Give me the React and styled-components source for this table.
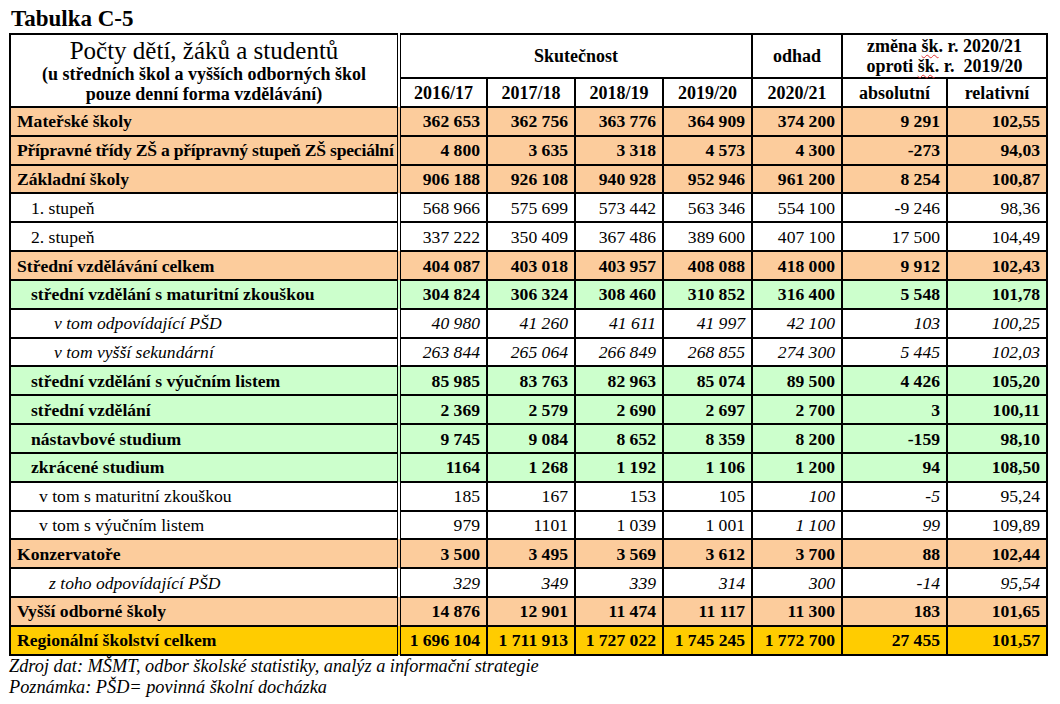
import React from "react";
import styled, { createGlobalStyle, css } from "styled-components";

const SERIF = `"Liberation Serif", "Times New Roman", serif`;

const GlobalStyle = createGlobalStyle`
  html, body { margin: 0; padding: 0; background: #fff; }
  body { font-family: ${SERIF}; color: #000; }
`;

const Page = styled.div`
  font-family: ${SERIF};
  color: #000;
  padding: 6px 9px 0 9px;
  width: 1042px;
`;

const Title = styled.h1`
  margin: 0 0 2px 2px;
  font-size: 23px;
  line-height: 25px;
  font-weight: bold;
`;

const Table = styled.table`
  border-collapse: collapse;
  table-layout: fixed;
  width: 1039px;
  border: 2px solid #000;
`;

const bg = {
  orange: "#FCCC9C",
  green: "#CCFFCC",
  white: "#FFFFFF",
  yellow: "#FFCC00",
};

const HeadCell = styled.th`
  border: 2px solid #000;
  padding: 0 2px;
  font-weight: bold;
  font-size: 18px;
  line-height: 20px;
  text-align: center;
  vertical-align: middle;
  background: #fff;
  ${(p) => p.$double && css`border-right: 4px double #000;`}
`;

const MainHead = styled.div`
  font-size: 25px;
  line-height: 26px;
  font-weight: normal;
`;

const SubHead = styled.div`
  font-size: 18px;
  line-height: 20px;
  font-weight: bold;
`;

const Spell = styled.span`
  text-decoration: underline wavy #e03030;
  text-decoration-thickness: 1px;
  text-underline-offset: 2px;
`;

const HeadRow1 = styled.tr`
  height: 44px;
`;
const HeadRow2 = styled.tr`
  height: 29px;
`;

const Row = styled.tr`
  height: 28.84px;
  background: ${(p) => bg[p.$kind]};
`;

const LabelCell = styled.td`
  border: 2px solid #000;
  border-right: 4px double #000;
  padding: 0 0 0 ${(p) => 6 + (p.$indent || 0)}px;
  font-size: 17.6px;
  line-height: 20px;
  letter-spacing: ${(p) => (p.$tight ? "-0.22px" : "normal")};
  font-weight: ${(p) => (p.$bold ? "bold" : "normal")};
  font-style: ${(p) => (p.$italic ? "italic" : "normal")};
  white-space: nowrap;
  vertical-align: middle;
`;

const NumCell = styled.td`
  border: 2px solid #000;
  padding: 0 6px 0 0;
  font-size: 17.6px;
  line-height: 20px;
  text-align: right;
  font-weight: ${(p) => (p.$bold ? "bold" : "normal")};
  font-style: ${(p) => (p.$italic ? "italic" : "normal")};
  white-space: nowrap;
  vertical-align: middle;
`;

const Note = styled.p`
  margin: 0;
  font-style: italic;
  font-size: 18.3px;
  line-height: 21px;
`;

const s = (t) => t.replace(/ /g, "\u00a0");

const rows = [
  { label: "Mateřské školy", kind: "orange", bold: true, v: ["362 653", "362 756", "363 776", "364 909", "374 200", "9 291", "102,55"] },
  { label: "Přípravné třídy ZŠ a přípravný stupeň ZŠ speciální", kind: "orange", bold: true, tight: true, v: ["4 800", "3 635", "3 318", "4 573", "4 300", "-273", "94,03"] },
  { label: "Základní školy", kind: "orange", bold: true, v: ["906 188", "926 108", "940 928", "952 946", "961 200", "8 254", "100,87"] },
  { label: "1. stupeň", kind: "white", indent: 14, v: ["568 966", "575 699", "573 442", "563 346", "554 100", "-9 246", "98,36"] },
  { label: "2. stupeň", kind: "white", indent: 14, v: ["337 222", "350 409", "367 486", "389 600", "407 100", "17 500", "104,49"] },
  { label: "Střední vzdělávání celkem", kind: "orange", bold: true, v: ["404 087", "403 018", "403 957", "408 088", "418 000", "9 912", "102,43"] },
  { label: "střední vzdělání s maturitní zkouškou", kind: "green", bold: true, indent: 14, v: ["304 824", "306 324", "308 460", "310 852", "316 400", "5 548", "101,78"] },
  { label: "v tom odpovídající PŠD", kind: "white", italic: true, indent: 37, v: ["40 980", "41 260", "41 611", "41 997", "42 100", "103", "100,25"] },
  { label: "v tom vyšší sekundární", kind: "white", italic: true, indent: 37, v: ["263 844", "265 064", "266 849", "268 855", "274 300", "5 445", "102,03"] },
  { label: "střední vzdělání s výučním listem", kind: "green", bold: true, indent: 14, v: ["85 985", "83 763", "82 963", "85 074", "89 500", "4 426", "105,20"] },
  { label: "střední vzdělání", kind: "green", bold: true, indent: 14, v: ["2 369", "2 579", "2 690", "2 697", "2 700", "3", "100,11"] },
  { label: "nástavbové studium", kind: "green", bold: true, indent: 14, v: ["9 745", "9 084", "8 652", "8 359", "8 200", "-159", "98,10"] },
  { label: "zkrácené studium", kind: "green", bold: true, indent: 14, v: ["1164", "1 268", "1 192", "1 106", "1 200", "94", "108,50"] },
  { label: "v tom s maturitní zkouškou", kind: "white", indent: 22, italicCols: [4, 5], v: ["185", "167", "153", "105", "100", "-5", "95,24"] },
  { label: "v tom s výučním listem", kind: "white", indent: 22, italicCols: [4, 5], v: ["979", "1101", "1 039", "1 001", "1 100", "99", "109,89"] },
  { label: "Konzervatoře", kind: "orange", bold: true, v: ["3 500", "3 495", "3 569", "3 612", "3 700", "88", "102,44"] },
  { label: "z toho odpovídající PŠD", kind: "white", italic: true, indent: 32, v: ["329", "349", "339", "314", "300", "-14", "95,54"] },
  { label: "Vyšší odborné školy", kind: "orange", bold: true, v: ["14 876", "12 901", "11 474", "11 117", "11 300", "183", "101,65"] },
  { label: "Regionální školství celkem", kind: "yellow", bold: true, v: ["1 696 104", "1 711 913", "1 727 022", "1 745 245", "1 772 700", "27 455", "101,57"] },
];

const colWidths = [389, 88, 88, 88, 89, 90, 105, 100];

export default function App() {
  return (
    <>
      <GlobalStyle />
      <Page>
        <Title>Tabulka C-5</Title>
        <Table>
          <colgroup>
            {colWidths.map((w, i) => (
              <col key={i} style={{ width: w }} />
            ))}
          </colgroup>
          <thead>
            <HeadRow1>
              <HeadCell rowSpan={2} $double>
                <MainHead>Počty dětí, žáků a studentů</MainHead>
                <SubHead>(u středních škol a vyšších odborných škol</SubHead>
                <SubHead>pouze denní forma vzdělávání)</SubHead>
              </HeadCell>
              <HeadCell colSpan={4}>Skutečnost</HeadCell>
              <HeadCell>odhad</HeadCell>
              <HeadCell colSpan={2}>
                změna <Spell>šk</Spell>. r. 2020/21
                <br />
                oproti <Spell>šk</Spell>. r.&nbsp; 2019/20
              </HeadCell>
            </HeadRow1>
            <HeadRow2>
              <HeadCell>2016/17</HeadCell>
              <HeadCell>2017/18</HeadCell>
              <HeadCell>2018/19</HeadCell>
              <HeadCell>2019/20</HeadCell>
              <HeadCell>2020/21</HeadCell>
              <HeadCell>absolutní</HeadCell>
              <HeadCell>relativní</HeadCell>
            </HeadRow2>
          </thead>
          <tbody>
            {rows.map((r, i) => (
              <Row key={i} $kind={r.kind}>
                <LabelCell $bold={r.bold} $italic={r.italic} $indent={r.indent} $tight={r.tight}>
                  {r.label}
                </LabelCell>
                {r.v.map((val, j) => (
                  <NumCell
                    key={j}
                    $bold={r.bold}
                    $italic={r.italic || (r.italicCols && r.italicCols.includes(j))}
                  >
                    {s(val)}
                  </NumCell>
                ))}
              </Row>
            ))}
          </tbody>
        </Table>
        <Note>Zdroj dat: MŠMT, odbor školské statistiky, analýz a informační strategie</Note>
        <Note>Poznámka: PŠD= povinná školní docházka</Note>
      </Page>
    </>
  );
}
